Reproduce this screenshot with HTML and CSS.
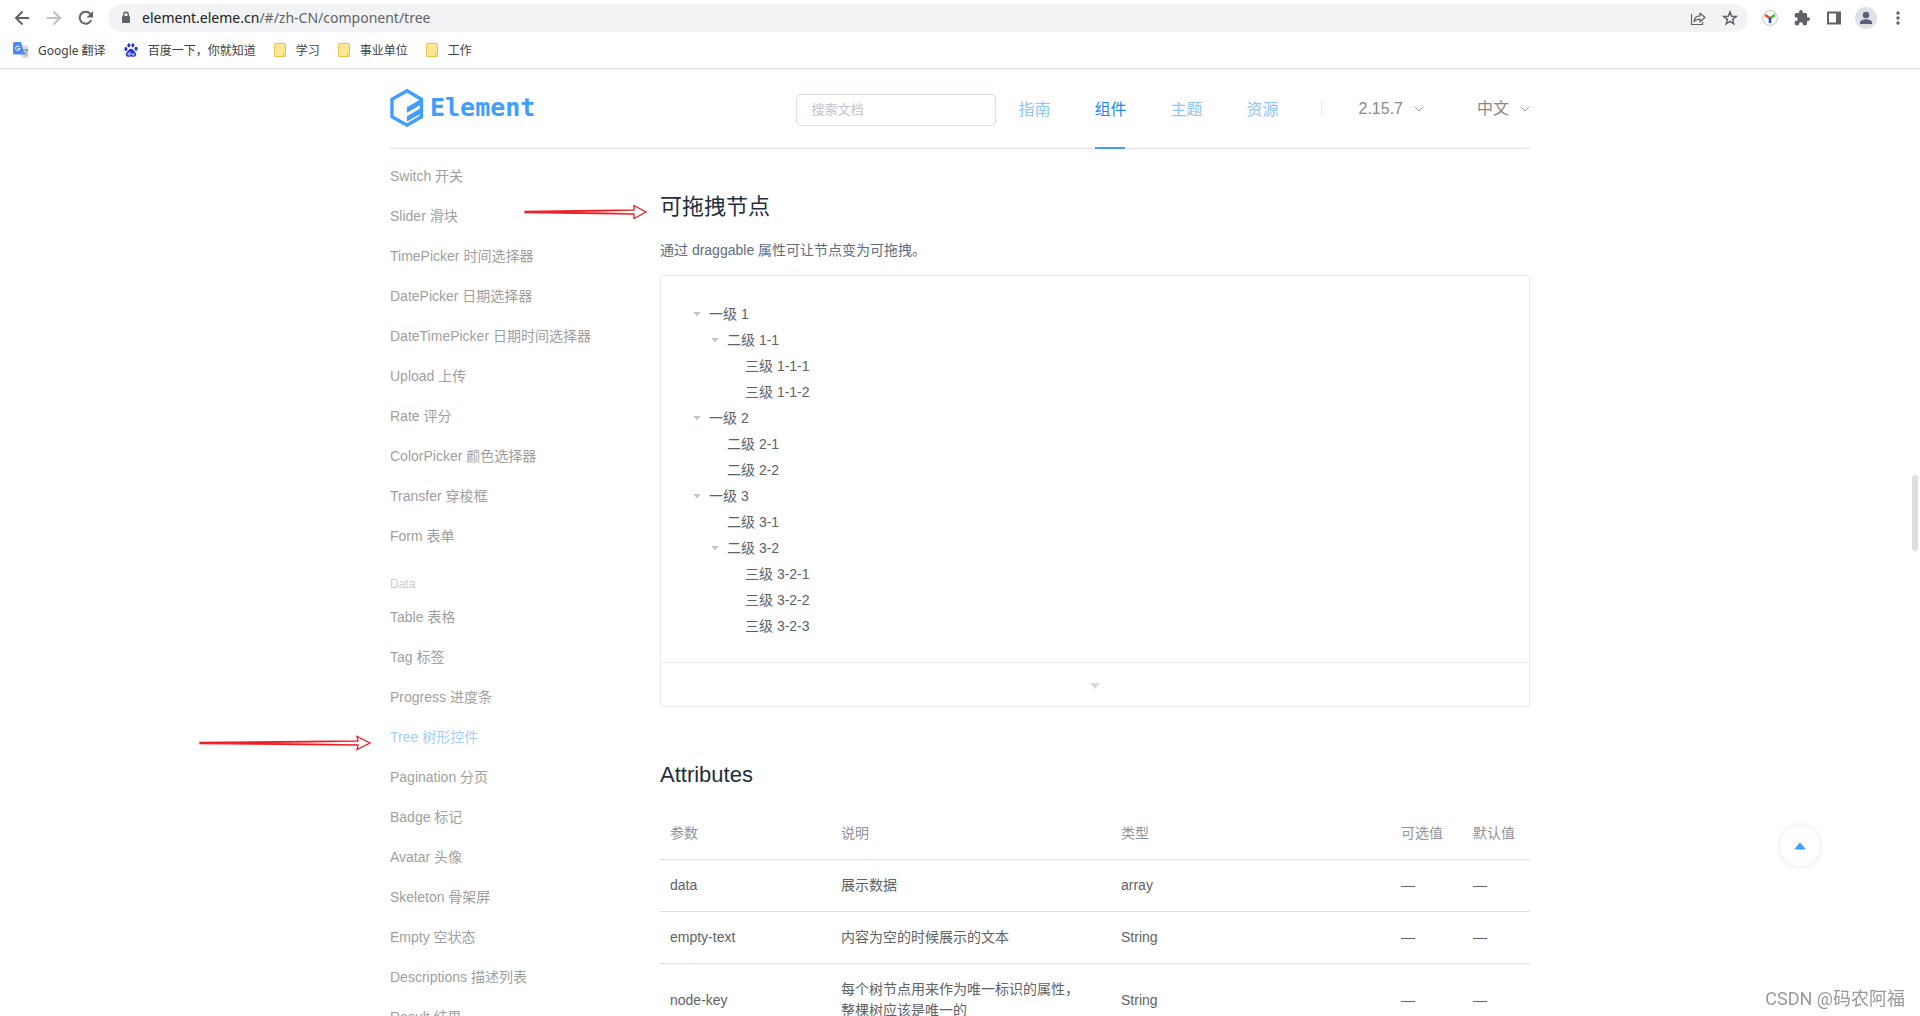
FILE: index.html
```html
<!DOCTYPE html>
<html lang="zh-CN">
<head>
<meta charset="utf-8">
<title>Element - 组件</title>
<link rel="stylesheet" href="styles.css">
</head>
<body>
<div class="browser">
  <div class="toolbar">
    <div class="nav-buttons">
      <button class="icon-btn" aria-label="后退"><svg width="16" height="16" viewBox="0 0 16 16" fill="none" stroke="#5f6368" stroke-width="2"><path d="M15 8H2.500M8.500 1.500 2 8l6.500 6.500"/></svg></button>
      <button class="icon-btn" aria-label="前进"><svg width="16" height="16" viewBox="0 0 16 16" fill="none" stroke="#bdc0c4" stroke-width="2"><path d="M1 8h12.500M7.500 1.500 14 8l-6.500 6.500"/></svg></button>
      <button class="icon-btn" aria-label="刷新"><svg width="16" height="16" viewBox="0 0 16 16"><path d="M13.200 10.200A6 6 0 1 1 12.300 3.800" fill="none" stroke="#5f6368" stroke-width="2"/><path d="M15 1v6.500H8.500z" fill="#5f6368"/></svg></button>
    </div>
    <div class="omnibox">
      <svg width="10" height="14" viewBox="0 0 10 14"><rect x="1" y="5" width="8" height="7" rx="1" fill="#5f6368"/><path d="M2.700 5.500V3.600a2.300 2.300 0 0 1 4.600 0v1.900" fill="none" stroke="#5f6368" stroke-width="1.400"/></svg>
      <span class="url"><b>element.eleme.cn</b>/#/zh-CN/component/tree</span>
      <button class="icon-btn" aria-label="分享"><svg width="16" height="16" viewBox="0 0 16 16" fill="none" stroke="#5f6368" stroke-width="1.200"><path d="M1.500 4v10.500h11V12"/><path d="M4 11.500c.5-3.800 2.500-5.500 6-5.600V3.200L15 7.500l-5 4.300V9.200c-2.700 0-4.500.6-6 2.300z" stroke-linejoin="round"/></svg></button>
      <button class="icon-btn" aria-label="收藏"><svg width="16" height="16" viewBox="0 0 16 16" fill="none" stroke="#5f6368" stroke-width="1.500"><path d="m8 2 1.700 4.200 4.500.3-3.500 2.900 1.100 4.400L8 11.400l-3.800 2.400 1.100-4.400-3.500-2.900 4.500-.3z"/></svg></button>
    </div>
    <div class="extensions">
      <button class="icon-btn" aria-label="扩展"><svg width="16" height="16" viewBox="0 0 16 16" fill="none"><circle cx="8" cy="8" r="7.400" fill="#fff" stroke="#c4c4c4"/><g stroke-width="2.600"><path d="m3 5 4.800 3" stroke="#fa3e13"/><path d="m13 5-4.800 3" stroke="#34c60f"/><path d="M8 8v5" stroke="#1649e0"/></g></svg></button>
      <button class="icon-btn" aria-label="扩展程序"><svg width="16" height="16" viewBox="1 1 22 22" fill="#5f6368"><path d="M20.500 11H19V7c0-1.100-.9-2-2-2h-4V3.500a2.500 2.500 0 0 0-5 0V5H4c-1.100 0-2 .9-2 2v3.800h1.500a2.700 2.700 0 0 1 0 5.400H2V20c0 1.100.9 2 2 2h3.800v-1.500a2.700 2.700 0 0 1 5.400 0V22H17c1.100 0 2-.9 2-2v-4h1.500a2.500 2.500 0 0 0 0-5z"/></svg></button>
      <button class="icon-btn" aria-label="侧边栏"><svg width="16" height="16" viewBox="0 0 16 16"><path d="M1 1.500h14v13H1zM3 3.500v9h7v-9z" fill="#5f6368" fill-rule="evenodd"/></svg></button>
      <button class="icon-btn avatar" aria-label="用户"><svg width="22" height="22" viewBox="0 0 22 22"><circle cx="11" cy="11" r="11" fill="#dee1e6"/><circle cx="11" cy="8" r="3.200" fill="#55617a"/><path d="M5 17v-1.500c0-2.300 4-3.300 6-3.300s6 1 6 3.300V17z" fill="#55617a"/></svg></button>
      <button class="icon-btn" aria-label="菜单"><svg width="16" height="16" viewBox="0 0 16 16" fill="#5f6368"><circle cx="8" cy="3" r="1.700"/><circle cx="8" cy="8" r="1.700"/><circle cx="8" cy="13" r="1.700"/></svg></button>
    </div>
  </div>
  <div class="bookmarks">
    <a class="bookmark" href="#"><svg width="16" height="16" viewBox="0 0 16 16"><path d="M6 3.500h9.500V16H9z" fill="#d8dadd"/><path d="M0 1.500Q0 0 1.500 0H8l3.500 12.500H1.500Q0 12.500 0 11z" fill="#4a8af4"/><path d="M6.500 4.800A2.200 2.200 0 1 0 7 6.600H4.800" fill="none" stroke="#fff" stroke-width="1"/><path d="M10 8h5M12.500 7v1.500m1.500 0c-.4 2-1.500 3.500-3 4.500m0-3c.8 1.500 2 2.500 3.200 3.200" stroke="#7b8794" fill="none"/></svg>Google 翻译</a>
    <a class="bookmark" href="#"><svg width="14" height="14" viewBox="0 0 14 14" fill="#2932e1"><ellipse cx="1.900" cy="6" rx="1.600" ry="2"/><ellipse cx="4.900" cy="2.300" rx="1.500" ry="2.100"/><ellipse cx="8.900" cy="2.300" rx="1.500" ry="2.100"/><ellipse cx="12.100" cy="5.800" rx="1.600" ry="2"/><path d="M7 5.800c1.900 0 2.600 1.900 3.900 3 1.700 1.500 1.800 4.700-.8 5-1.200.1-2-.3-3.100-.3s-1.900.4-3.100.3c-2.600-.3-2.500-3.500-.8-5C4.400 7.700 5.100 5.800 7 5.800z"/><path d="M6 9v3H4.800a.9.900 0 0 1 0-1.900H6M8 10v1.500q0 .6.700.6H10V10" fill="none" stroke="#fff" stroke-width=".8"/></svg>百度一下，你就知道</a>
    <a class="bookmark" href="#"><svg width="12" height="14" viewBox="0 0 12 14"><path d="M.5.500h11v13H.5z" fill="#ffe694" stroke="#e8c64d"/><path d="M9.500 13.500v-3h2" fill="none" stroke="#e8c64d"/></svg>学习</a>
    <a class="bookmark" href="#"><svg width="12" height="14" viewBox="0 0 12 14"><path d="M.5.500h11v13H.5z" fill="#ffe694" stroke="#e8c64d"/><path d="M9.500 13.500v-3h2" fill="none" stroke="#e8c64d"/></svg>事业单位</a>
    <a class="bookmark" href="#"><svg width="12" height="14" viewBox="0 0 12 14"><path d="M.5.500h11v13H.5z" fill="#ffe694" stroke="#e8c64d"/><path d="M9.500 13.500v-3h2" fill="none" stroke="#e8c64d"/></svg>工作</a>
  </div>
</div>

<header class="container header">
  <a class="logo" href="#"><svg width="34" height="38" viewBox="0 0 34 38"><path d="M31.500 11V10.200L17 1.800 2 10.200v17.600L17 36.200l14.500-8.400V11" fill="none" stroke="#409eff" stroke-width="3.400"/><path d="M17 18.200 32 9.500v5.600L17 23.800q-.4-3.200 0-5.600zM17 27.200 32 18.500v5.600L17 32.500q-.4-3 0-5.300z" fill="#409eff"/></svg><span>Element</span></a>
  <input class="search" type="text" placeholder="搜索文档" aria-label="搜索文档">
  <nav class="main-nav">
    <a href="#">指南</a>
    <a href="#" class="active">组件</a>
    <a href="#">主题</a>
    <a href="#">资源</a>
  </nav>
  <button class="dropdown version">2.15.7<svg width="10" height="6" viewBox="0 0 10 6"><path d="m.5.500 4.500 4.500L9.500.500" fill="none" stroke="#a8a8a8"/></svg></button>
  <button class="dropdown">中文<svg width="10" height="6" viewBox="0 0 10 6"><path d="m.5.500 4.500 4.500L9.500.500" fill="none" stroke="#a8a8a8"/></svg></button>
</header>

<div class="container page">
  <aside class="side-nav">
    <a href="#">Switch 开关</a>
    <a href="#">Slider 滑块</a>
    <a href="#">TimePicker 时间选择器</a>
    <a href="#">DatePicker 日期选择器</a>
    <a href="#">DateTimePicker 日期时间选择器</a>
    <a href="#">Upload 上传</a>
    <a href="#">Rate 评分</a>
    <a href="#">ColorPicker 颜色选择器</a>
    <a href="#">Transfer 穿梭框</a>
    <a href="#">Form 表单</a>
    <div class="group-title">Data</div>
    <a href="#">Table 表格</a>
    <a href="#">Tag 标签</a>
    <a href="#">Progress 进度条</a>
    <a href="#" class="active">Tree 树形控件</a>
    <a href="#">Pagination 分页</a>
    <a href="#">Badge 标记</a>
    <a href="#">Avatar 头像</a>
    <a href="#">Skeleton 骨架屏</a>
    <a href="#">Empty 空状态</a>
    <a href="#">Descriptions 描述列表</a>
    <a href="#">Result 结果</a>
  </aside>

  <main class="content">
    <h3>可拖拽节点</h3>
    <p>通过 draggable 属性可让节点变为可拖拽。</p>
    <section class="demo">
      <ul class="tree">
        <li><span class="node open">一级 1</span>
          <ul>
            <li><span class="node open">二级 1-1</span>
              <ul>
                <li><span class="node">三级 1-1-1</span></li>
                <li><span class="node">三级 1-1-2</span></li>
              </ul>
            </li>
          </ul>
        </li>
        <li><span class="node open">一级 2</span>
          <ul>
            <li><span class="node">二级 2-1</span></li>
            <li><span class="node">二级 2-2</span></li>
          </ul>
        </li>
        <li><span class="node open">一级 3</span>
          <ul>
            <li><span class="node">二级 3-1</span></li>
            <li><span class="node open">二级 3-2</span>
              <ul>
                <li><span class="node">三级 3-2-1</span></li>
                <li><span class="node">三级 3-2-2</span></li>
                <li><span class="node">三级 3-2-3</span></li>
              </ul>
            </li>
          </ul>
        </li>
      </ul>
      <button class="demo-toggle" aria-label="显示代码"><svg width="10" height="6" viewBox="0 0 10 6"><path d="M0 0h10L5 6z" fill="#d3dce6"/></svg></button>
    </section>

    <h3>Attributes</h3>
    <table>
      <colgroup><col class="c-name"><col class="c-desc"><col><col class="c-options"><col class="c-default"></colgroup>
      <thead>
        <tr><th>参数</th><th>说明</th><th>类型</th><th>可选值</th><th>默认值</th></tr>
      </thead>
      <tbody>
        <tr><td>data</td><td>展示数据</td><td>array</td><td>—</td><td>—</td></tr>
        <tr><td>empty-text</td><td>内容为空的时候展示的文本</td><td>String</td><td>—</td><td>—</td></tr>
        <tr><td>node-key</td><td>每个树节点用来作为唯一标识的属性，整棵树应该是唯一的</td><td>String</td><td>—</td><td>—</td></tr>
      </tbody>
    </table>
  </main>
</div>

<svg class="arrow arrow-heading" width="124" height="16" viewBox="0 0 124 16"><defs><linearGradient id="fade"><stop offset=".35" stop-color="#ed1c24"/><stop offset=".85" stop-color="#fff"/></linearGradient></defs><path d="M1 7.500 110 6V1.500L122 8l-12 6.500V10L1 8.500z" fill="url(#fade)" stroke="#ed1c24" stroke-width="1.300"/></svg>
<svg class="arrow arrow-menu" width="174" height="16" viewBox="0 0 174 16"><path d="M1 7.500 159 6l-1-4.500L171 8l-13 6.500 1-4.500L1 8.500z" fill="url(#fade)" stroke="#ed1c24" stroke-width="1.300"/></svg>

<button class="back-top" aria-label="回到顶部"><svg width="12" height="8" viewBox="0 0 12 8"><path d="M0 7.500h12L6 .5z" fill="#409eff"/></svg></button>
<div class="scroll-thumb"></div>
<div class="watermark">CSDN @码农阿福</div>
</body>
</html>
```
FILE: styles.css
```css
* {
  box-sizing: border-box;
}

body {
  margin: 0;
  height: 100vh;
  overflow: hidden;
  background: #fff;
  color: #606266;
  font: 14px/21px "Liberation Sans", "Noto Sans CJK SC", sans-serif;
}

a {
  color: inherit;
  text-decoration: none;
}

button {
  display: flex;
  align-items: center;
  justify-content: center;
  padding: 0;
  border: 0;
  background: none;
  color: inherit;
  font: inherit;
}

svg {
  display: block;
  flex: none;
}

/* Browser bar */
.browser {
  border-bottom: 1px solid #dadce0;
  font-family: "Noto Sans", "Noto Sans CJK SC", sans-serif;
}

.toolbar {
  display: flex;
  align-items: center;
  height: 36px;
}

.nav-buttons {
  display: flex;
  gap: 16px;
  padding: 0 14px;
}

.omnibox {
  display: flex;
  flex: 1;
  align-items: center;
  gap: 16px;
  height: 28px;
  padding: 0 10px 0 13px;
  border-radius: 14px;
  background: #f1f3f4;
}

.url {
  flex: 1;
  margin-left: -5px;
  padding-bottom: 2px;
  color: #5f6368;
  font-size: 14px;
}

.url b {
  color: #202124;
  font-weight: normal;
}

.extensions {
  display: flex;
  align-items: center;
  gap: 16px;
  padding: 0 14px;
}

.avatar {
  margin: 0 -3px;
}

.bookmarks {
  display: flex;
  align-items: center;
  gap: 18px;
  height: 32px;
  padding: 0 14px 4px 13px;
  color: #3c4043;
  font-size: 12px;
}

.bookmark {
  display: flex;
  align-items: center;
  gap: 10px;
}

.bookmark:first-child {
  gap: 9px;
}

/* Site header */
.container {
  width: 1140px;
  max-width: 100%;
  margin: 0 auto;
}

.header {
  display: flex;
  align-items: center;
  height: 80px;
  border-bottom: 1px solid #dcdfe6;
  color: #888;
  font-size: 16px;
}

.logo {
  display: flex;
  align-items: center;
  gap: 6px;
  margin-right: auto;
  padding-bottom: 1px;
  color: #409eff;
  font: bold 25px/38px "DejaVu Sans Mono", monospace;
}

.search {
  width: 200px;
  height: 32px;
  margin-top: 2px;
  padding: 0 14px;
  border: 1px solid #dcdfe6;
  border-radius: 4px;
  font: 13px "Liberation Sans", "Noto Sans CJK SC", sans-serif;
}

.search::placeholder {
  color: #c0c4cc;
}

.main-nav {
  display: flex;
  align-self: stretch;
}

.main-nav a {
  display: flex;
  align-items: center;
  margin-bottom: -1px;
  padding: 0 22px;
  color: #8cc5ff;
}

.main-nav .active {
  color: #1989fa;
  background: linear-gradient(#409eff, #409eff) center bottom / 30px 2px no-repeat;
}

.dropdown {
  gap: 11px;
  margin-left: 53px;
  color: #888;
}

.version {
  margin-left: 20px;
  padding-left: 37px;
  height: 16px;
  border-left: 1px solid #ebebeb;
}

/* Page body */
.page {
  display: flex;
}

.side-nav {
  width: 270px;
  padding-top: 7px;
  color: #9f9f9f;
}

.side-nav a {
  display: block;
  line-height: 40px;
}

.side-nav .active {
  color: #9fcfff;
}

.group-title {
  margin-top: 15px;
  color: #ccc;
  font-size: 12px;
  line-height: 26px;
}

.content {
  flex: 1;
  min-width: 0;
  padding-top: 42px;
}

h3 {
  margin: 0;
  color: #1f2f3d;
  font-size: 22px;
  font-weight: normal;
  line-height: 32px;
}

.content p {
  margin: 15px 0 13px;
  color: #5e6d82;
  line-height: 24px;
}

.demo {
  margin-bottom: 52px;
  border: 1px solid #ebebeb;
  border-radius: 3px;
}

.tree,
.tree ul {
  margin: 0;
  padding: 0;
  list-style: none;
}

.tree {
  padding: 25px 24px 23px;
}

.tree ul {
  padding-left: 18px;
}

.node {
  display: flex;
  align-items: center;
  padding-left: 24px;
  line-height: 26px;
}

.open {
  padding-left: 0;
}

.open::before {
  content: "";
  width: 8px;
  height: 5px;
  margin: 0 8px;
  background: #c0c4cc;
  clip-path: polygon(0 0, 100% 0, 50% 100%);
}

.demo-toggle {
  width: 100%;
  height: 44px;
  padding-top: 2px;
  border-top: 1px solid #eaeefb;
}

table {
  width: 100%;
  margin-top: 17px;
  border-collapse: collapse;
  table-layout: fixed;
}

.c-name { width: 171px; }
.c-desc { width: 280px; }
.c-options { width: 72px; }
.c-default { width: 67px; }

th,
td {
  padding: 15px 0 15px 10px;
  border-bottom: 1px solid #dcdfe6;
  text-align: left;
}

td:nth-child(2) {
  padding-right: 30px;
}

th {
  color: #909399;
  font-weight: normal;
}

/* Overlays */
.arrow {
  position: absolute;
}

.arrow-heading {
  left: 524px;
  top: 204px;
}

.arrow-menu {
  left: 199px;
  top: 735px;
}

.back-top {
  position: fixed;
  right: 100px;
  bottom: 150px;
  width: 40px;
  height: 40px;
  border-radius: 50%;
  background: #fff;
  box-shadow: 0 0 6px rgba(0, 0, 0, .12);
}

.scroll-thumb {
  position: fixed;
  top: 475px;
  right: 2px;
  width: 6px;
  height: 76px;
  border-radius: 3px;
  background: #dddee0;
}

.watermark {
  position: fixed;
  right: 15px;
  bottom: 5px;
  color: #999;
  font: 18px/24px Roboto, "Noto Sans CJK SC", sans-serif;
}
```
